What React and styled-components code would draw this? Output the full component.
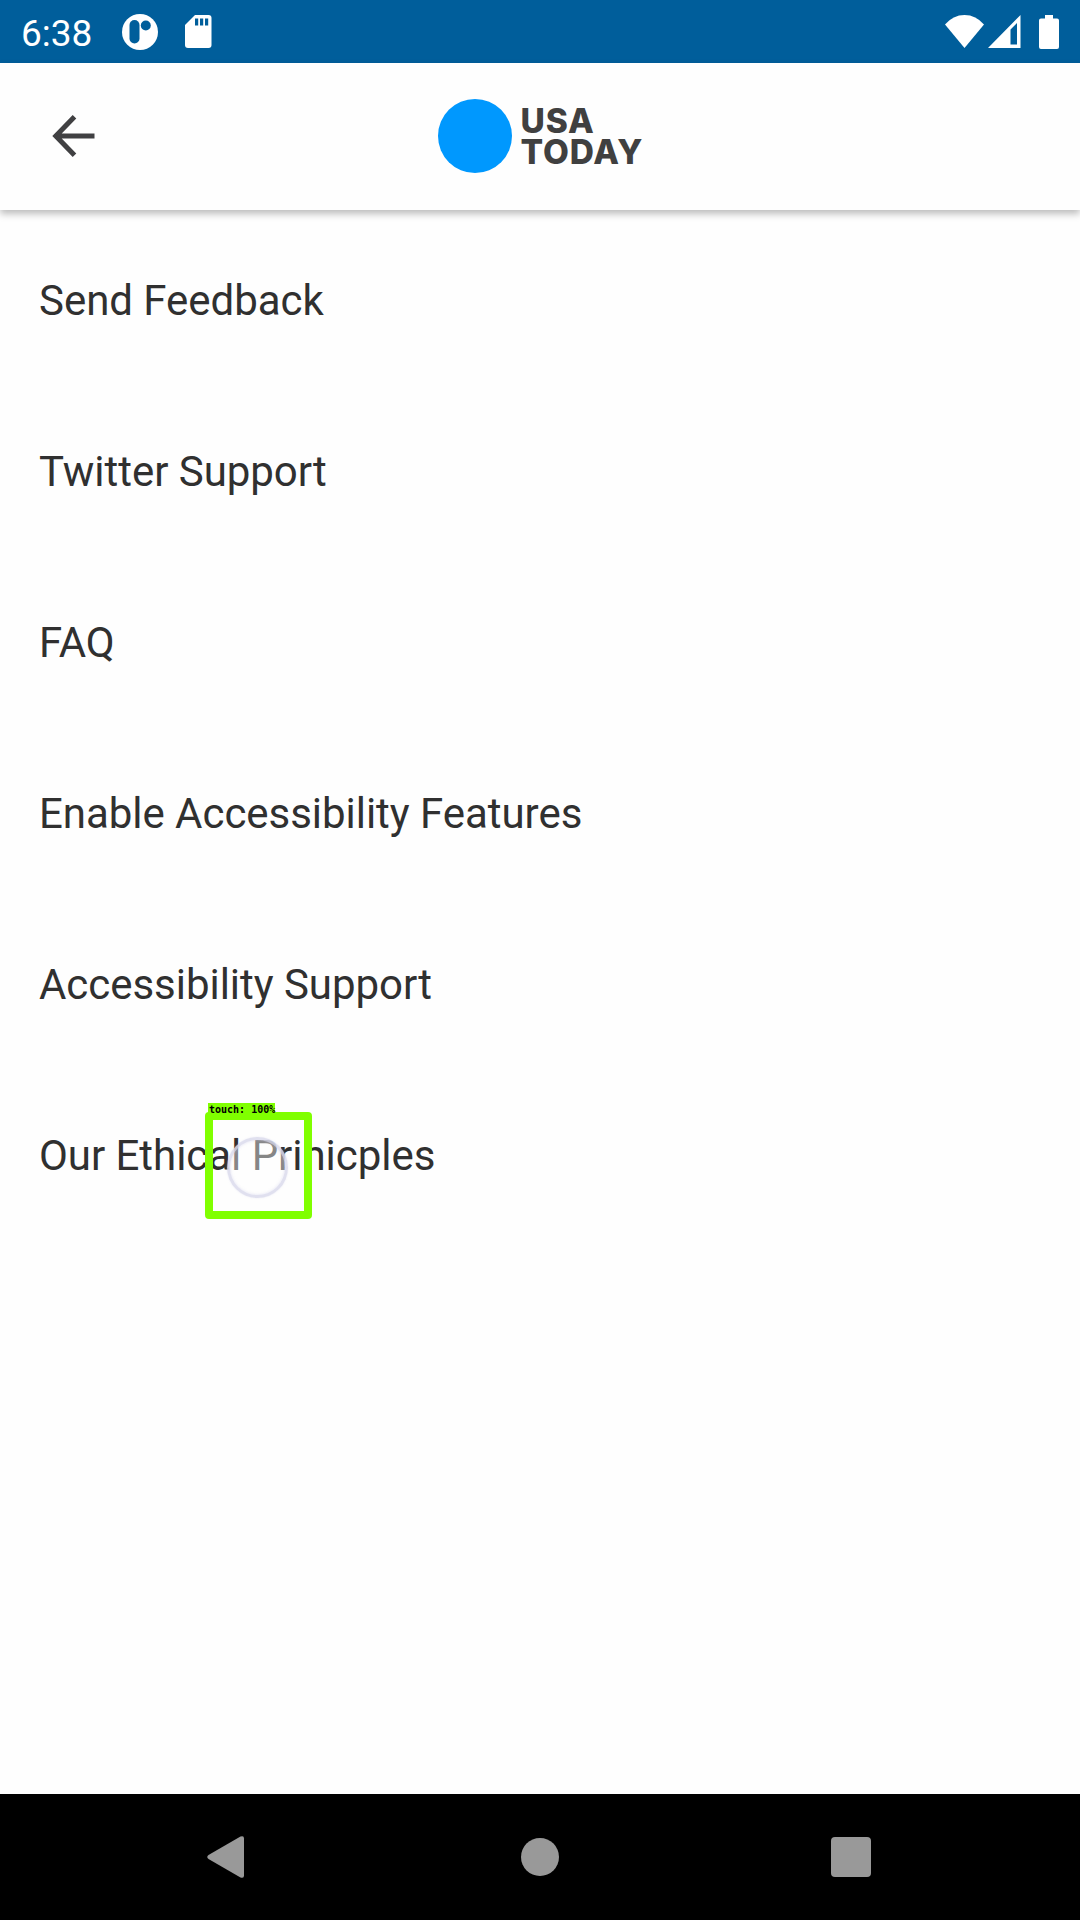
import React from "react";
import styled, { createGlobalStyle } from "styled-components";

const GlobalStyle = createGlobalStyle`
  * { box-sizing: border-box; }
  body { margin: 0; background: #fefefe; font-family: Roboto, "Liberation Sans", sans-serif; }
`;

const Screen = styled.div`
  display: flex;
  flex-direction: column;
  width: 1080px;
  height: 1920px;
  background: #fefefe;
  overflow: hidden;
`;

const StatusBar = styled.header`
  flex: none;
  display: flex;
  align-items: center;
  justify-content: space-between;
  height: 63px;
  padding: 0 21px;
  background: #005e9b;
  color: #fff;
`;

const StatusGroup = styled.div`
  display: flex;
  align-items: center;
  gap: ${(p) => p.$gap}px;
`;

const Clock = styled.span`
  width: 72px;
  margin-right: 2px;
  padding-top: 4px;
  font-size: 37px;
  line-height: 44px;
  white-space: nowrap;
`;

const Glyph = styled.svg`
  display: block;
  flex: none;
`;

const AppBar = styled.div`
  flex: none;
  display: grid;
  grid-template-columns: 1fr auto 1fr;
  align-items: center;
  height: 147px;
  padding: 0 48px 2px;
  background: #fefefe;
  box-shadow: 0 4px 7px rgba(0, 0, 0, 0.26);
`;

const BackButton = styled.button`
  display: flex;
  width: 52px;
  padding: 0;
  border: 0;
  background: none;
`;

const Logo = styled.div`
  display: flex;
  align-items: center;
  gap: 9px;
  width: 205px;
`;

const LogoDot = styled.span`
  flex: none;
  width: 74px;
  height: 74px;
  border-radius: 50%;
  background: #0098fe;
`;

const LogoName = styled.span`
  display: flex;
  flex-direction: column;
  padding-top: 3px;
  color: #404040;
  font-family: Inter, sans-serif;
  font-size: 33.5px;
  font-weight: 800;
  line-height: 31px;
  letter-spacing: 0.9px;
`;

const List = styled.main`
  flex: 1;
  display: flex;
  flex-direction: column;
  padding-top: 5px;
`;

const Item = styled.div`
  display: flex;
  align-items: center;
  height: 171px;
  padding: 0 39px;
  color: #303030;
  font-size: 42px;
  line-height: 50px;
  letter-spacing: -0.04px;
  white-space: nowrap;
`;

const ItemLabel = styled.span`
  position: relative;
`;

const TouchMarker = styled.div`
  position: absolute;
  left: 166px;
  top: -19px;
  width: 107px;
  height: 107px;
  border: 8px solid #80ff00;
  border-radius: 4px;
  letter-spacing: 0;
`;

const TouchCaption = styled.span`
  position: absolute;
  left: -5px;
  top: -17px;
  width: 67px;
  height: 11px;
  padding-left: 1px;
  background: #80ff00;
  color: #000;
  font: bold 10px/13px "DejaVu Sans Mono", monospace;
`;

const TouchRing = styled.span`
  position: absolute;
  left: 14px;
  top: 17px;
  width: 61px;
  height: 61px;
  border: 3px solid rgba(214, 214, 234, 0.75);
  border-radius: 50%;
  background: rgba(254, 254, 254, 0.42);
  box-shadow: inset 0 0 3px rgba(190, 190, 225, 0.5), 0 0 2px rgba(200, 200, 230, 0.4);
`;

const NavBar = styled.nav`
  flex: none;
  display: grid;
  grid-template-columns: repeat(3, 1fr);
  place-items: center;
  height: 126px;
  padding: 0 72px;
  background: #000;
`;

const items = [
  "Send Feedback",
  "Twitter Support",
  "FAQ",
  "Enable Accessibility Features",
  "Accessibility Support",
  "Our Ethical Prinicples",
];

const AppIcon = () => (
  <Glyph width="36" height="36" viewBox="0 0 36 36">
    <circle cx="18" cy="18" r="18" fill="#fff" />
    <rect x="7.5" y="6" width="10" height="23.5" rx="5" fill="#005e9b" />
    <circle cx="23.8" cy="11.5" r="5" fill="#005e9b" />
  </Glyph>
);

const SdIcon = () => (
  <Glyph width="27" height="33" viewBox="0 0 27 33">
    <path d="M10 0H23.5Q26.5 0 26.5 3V30Q26.5 33 23.5 33H3Q0 33 0 30V10Z" fill="#fff" />
    <path d="M10 3.5h3.2v7H10zM15 3.5h3.2v7H15zM20 3.5h3.2v7H20z" fill="#005e9b" />
  </Glyph>
);

const WifiIcon = () => (
  <Glyph width="39" height="33" viewBox="0 0 39 33">
    <path d="M0 9.5Q8 0 19.5 0T39 9.5L19.5 33Z" fill="#fff" />
  </Glyph>
);

const SignalIcon = () => (
  <Glyph width="33" height="33" viewBox="0 0 33 33">
    <path fillRule="evenodd" d="M0 33L32.5 0V33ZM22.5 14.5V29.5H29V8Z" fill="#fff" />
  </Glyph>
);

const BatteryIcon = () => (
  <Glyph width="20" height="34" viewBox="0 0 20 34">
    <path d="M6 0H14V3.5H18Q20 3.5 20 5.5V32Q20 34 18 34H2Q0 34 0 32V5.5Q0 3.5 2 3.5H6Z" fill="#fff" />
  </Glyph>
);

export default function App() {
  return (
    <>
      <GlobalStyle />
      <Screen>
        <StatusBar>
          <StatusGroup $gap={27}>
            <Clock>6:38</Clock>
            <AppIcon />
            <SdIcon />
          </StatusGroup>
          <StatusGroup $gap={4}>
            <WifiIcon />
            <SignalIcon />
            <Glyph width="10" height="1" />
            <BatteryIcon />
          </StatusGroup>
        </StatusBar>
        <AppBar>
          <BackButton aria-label="Back">
            <Glyph width="52" height="48" viewBox="0 0 52 48">
              <path d="M46.5 24H9M26.5 4.8L7.8 24L26.5 43.2" fill="none" stroke="#404042" strokeWidth="5" />
            </Glyph>
          </BackButton>
          <Logo>
            <LogoDot />
            <LogoName>
              <span>USA</span>
              <span>TODAY</span>
            </LogoName>
          </Logo>
        </AppBar>
        <List>
          {items.map((label, i) => (
            <Item key={label}>
              <ItemLabel>
                {label}
                {i === items.length - 1 && (
                  <TouchMarker>
                    <TouchCaption>touch: 100%</TouchCaption>
                    <TouchRing />
                  </TouchMarker>
                )}
              </ItemLabel>
            </Item>
          ))}
        </List>
        <NavBar>
          <Glyph width="42" height="42" viewBox="0 0 42 42">
            <path d="M33.5 .6Q37 -.8 37 2.5V39.5Q37 42.8 33.5 41.4L1.5 23Q-1 21 1.5 19Z" fill="#999" />
          </Glyph>
          <Glyph width="38" height="38" viewBox="0 0 38 38">
            <circle cx="19" cy="19" r="19" fill="#999" />
          </Glyph>
          <Glyph width="42" height="40" viewBox="0 0 42 40">
            <rect width="40" height="40" rx="4" fill="#999" />
          </Glyph>
        </NavBar>
      </Screen>
    </>
  );
}
